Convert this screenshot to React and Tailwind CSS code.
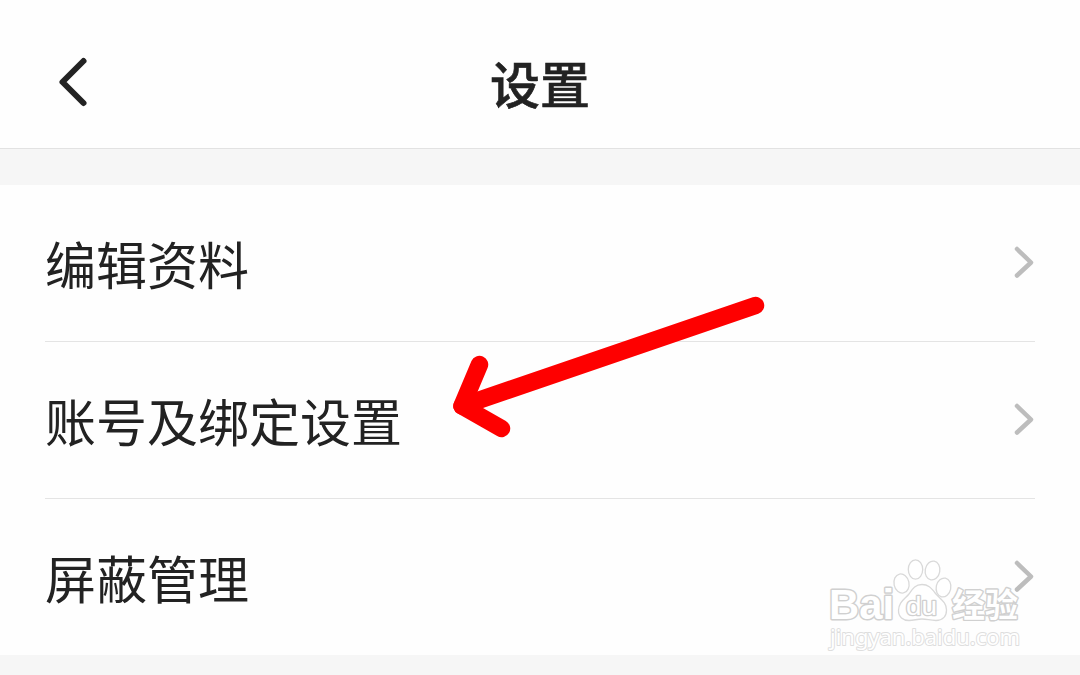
const rows = [
  { id: 'profile', label: '编辑资料' },
  { id: 'account', label: '账号及绑定设置' },
  { id: 'blocked', label: '屏蔽管理' },
]

function BackIcon() {
  return (
    <svg className="w-9 h-14" viewBox="0 0 36 56" fill="none">
      <path d="M28.500 7L7.500 28L28.500 49" stroke="#222222" strokeWidth="6" strokeLinecap="round" strokeLinejoin="round" />
    </svg>
  )
}

function ChevronIcon() {
  return (
    <svg className="w-6 h-9 mb-0.5" viewBox="0 0 24 36" fill="none">
      <path d="M6 5L20 18.500L6 31.500" stroke="#bdbdbd" strokeWidth="4.500" strokeLinecap="round" strokeLinejoin="round" />
    </svg>
  )
}

function SettingsRow({ label, last }) {
  return (
    <li className={last ? 'h-[156px]' : 'h-[157px] border-b border-[#e4e4e4]'}>
      <button className="w-full h-full flex items-center justify-between">
        <span className="pt-px text-[51px] leading-none text-[#222222]">{label}</span>
        <ChevronIcon />
      </button>
    </li>
  )
}

function Arrow() {
  return (
    <svg className="absolute left-[440px] top-[280px] w-[340px] h-[170px]" viewBox="0 0 340 170" fill="none">
      <g stroke="#fe0000" strokeWidth="17.500" strokeLinecap="round" strokeLinejoin="round">
        <path d="M315.500 25.500L22 126" />
        <path d="M39.500 84.500L22 126L61.500 148.500" />
      </g>
    </svg>
  )
}

function Watermark() {
  return (
    <svg className="absolute left-[810px] top-[545px] w-[240px] h-[130px]" viewBox="0 0 240 130">
      <g fill="#ffffff" fillOpacity="0.85" stroke="#d9d9d9" strokeWidth="1.300">
        <ellipse cx="91.500" cy="38.500" rx="7.500" ry="9.700" transform="rotate(-12 91.500 38.500)" />
        <ellipse cx="105.500" cy="24.500" rx="7.200" ry="9.700" />
        <ellipse cx="122.500" cy="25.500" rx="7.300" ry="9.500" transform="rotate(10 122.500 25.500)" />
        <ellipse cx="133.500" cy="42.500" rx="7.300" ry="9.500" transform="rotate(12 133.500 42.500)" />
        <path d="M112 39.500C105 39.500 102.500 44 99 49C95 54 88.500 57 88.500 65.500C88.500 72 93 75.500 99 75.500C104 75.500 107 74 112 74C117 74 120 75.500 126 75.500C132 75.500 136.500 72 136.500 65C136.500 57 130 54 125.500 48.500C121 42.500 118 39.500 112 39.500Z" />
      </g>
      <g fill="#ffffff" stroke="#d0d0d0" strokeLinejoin="round" paintOrder="stroke">
        <text x="19" y="74" fontSize="42" fontWeight="700" strokeWidth="3" textLength="65" lengthAdjust="spacingAndGlyphs" className="font-['Liberation_Sans',sans-serif]">Bai</text>
        <text x="96" y="70" fontSize="26" strokeWidth="2.600" textLength="31" lengthAdjust="spacingAndGlyphs" className="font-['Liberation_Sans',sans-serif]">du</text>
        <text x="142" y="72" fontSize="33" fontWeight="700" strokeWidth="2.800" textLength="66" lengthAdjust="spacingAndGlyphs" className="font-['Noto_Sans_CJK_SC',sans-serif]">经验</text>
        <text x="20" y="100" fontSize="22" strokeWidth="2" stroke="#dedede" textLength="190" lengthAdjust="spacingAndGlyphs" className="font-['Noto_Sans',sans-serif]">jingyan.baidu.com</text>
      </g>
    </svg>
  )
}

export default function App() {
  return (
    <div className="relative w-[1080px] h-[675px] overflow-hidden bg-[#f6f6f6] font-['Noto_Sans_CJK_SC',sans-serif]">
      <header className="h-[149px] grid grid-cols-[1fr_auto_1fr] items-center px-[55px] pt-[15px] bg-[#fefefe] border-b border-[#e2e2e2]">
        <button className="justify-self-start" aria-label="返回">
          <BackIcon />
        </button>
        <h1 className="pt-px text-[50px] leading-none font-medium text-[#222222] [-webkit-text-stroke:0.6px_#222222]">设置</h1>
      </header>

      <ul className="mt-9 pl-[45px] pr-[45px] bg-[#fefefe]">
        {rows.map((row, i) => (
          <SettingsRow key={row.id} label={row.label} last={i === rows.length - 1} />
        ))}
      </ul>

      <Arrow />
      <Watermark />
    </div>
  )
}
